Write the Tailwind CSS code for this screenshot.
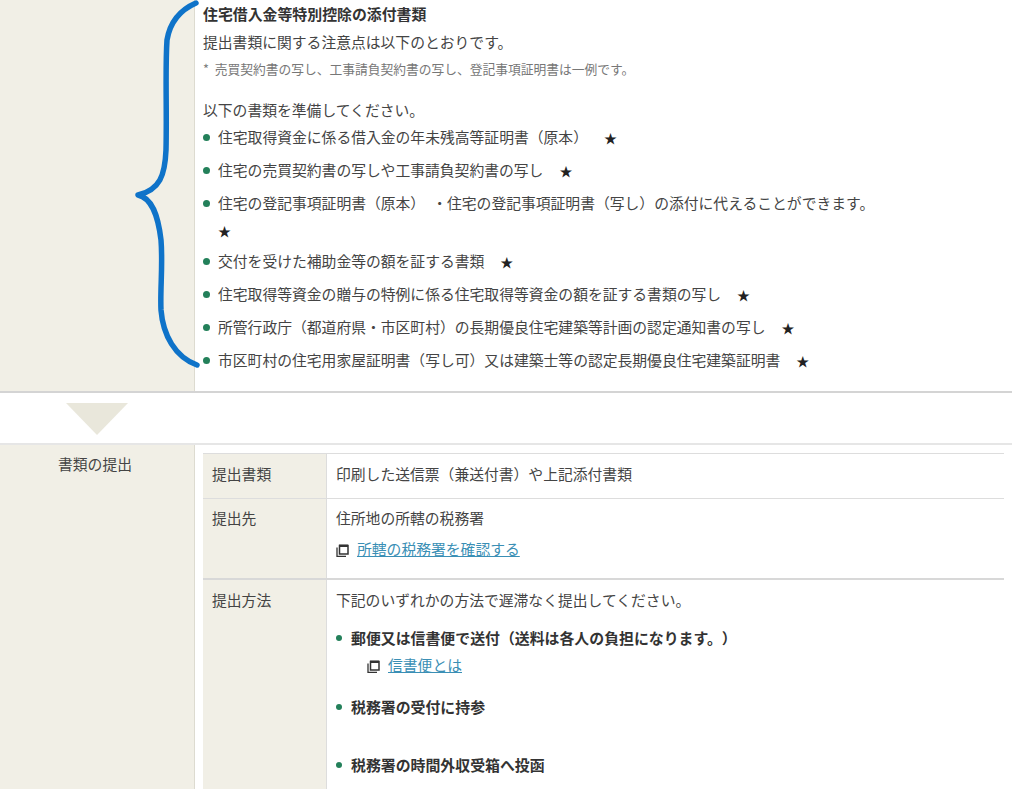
<!DOCTYPE html>
<html lang="ja">
<head>
  <meta charset="UTF-8" />
  <title>住宅借入金等特別控除の添付書類</title>
  <script src="https://cdn.jsdelivr.net/npm/@tailwindcss/browser@4"></script>
</head>
<body class="relative h-[789px] w-[1024px] overflow-hidden bg-white font-['Noto_Sans_CJK_JP','Noto_Sans',sans-serif] text-[14.8px] text-[#444] [text-spacing-trim:space-all]">
  <div class="w-[1012px]">

    <section class="flex h-[393px] border-b-2 border-[#d4d4d4]">
      <div class="w-[195px] shrink-0 border-r border-[#dddbd0] bg-[#f1efe6]"></div>
      <div class="flex-1 pl-[8px] pt-[2px]">
        <h3 class="text-[14.9px] font-bold leading-[24px] text-[#333]">住宅借入金等特別控除の添付書類</h3>
        <p class="mt-[4px] leading-[24px]">提出書類に関する注意点は以下のとおりです。</p>
        <p class="mt-[4px] text-[12.75px] leading-[22px] text-[#777]"><span class="mr-[3px]">*</span> 売買契約書の写し、工事請負契約書の写し、登記事項証明書は一例です。</p>
        <p class="mt-[18px] leading-[24px]">以下の書類を準備してください。</p>
        <ul class="mt-[1px] flex flex-col gap-[6px] leading-[27px]">
          <li class="flex"><span class="mr-[8px] mt-[11px] size-[7px] shrink-0 rounded-full bg-[#23805a]"></span><span>住宅取得資金に係る借入金の年未残高等証明書（原本）<span class="ml-[16px] text-[13px] leading-none text-[#222]">★</span></span></li>
          <li class="flex"><span class="mr-[8px] mt-[11px] size-[7px] shrink-0 rounded-full bg-[#23805a]"></span><span>住宅の売買契約書の写しや工事請負契約書の写し<span class="ml-[16px] text-[13px] leading-none text-[#222]">★</span></span></li>
          <li class="-mb-[2px] flex"><span class="mr-[8px] mt-[11px] size-[7px] shrink-0 rounded-full bg-[#23805a]"></span><span class="w-[680px]">住宅の登記事項証明書（原本）<span class="ml-[7px]">・</span>住宅の登記事項証明書（写し）の添付に代えることができます。<br /><span class="text-[13px] leading-none text-[#222]">★</span></span></li>
          <li class="flex"><span class="mr-[8px] mt-[11px] size-[7px] shrink-0 rounded-full bg-[#23805a]"></span><span>交付を受けた補助金等の額を証する書類<span class="ml-[16px] text-[13px] leading-none text-[#222]">★</span></span></li>
          <li class="flex"><span class="mr-[8px] mt-[11px] size-[7px] shrink-0 rounded-full bg-[#23805a]"></span><span>住宅取得等資金の贈与の特例に係る住宅取得等資金の額を証する書類の写し<span class="ml-[16px] text-[13px] leading-none text-[#222]">★</span></span></li>
          <li class="flex"><span class="mr-[8px] mt-[11px] size-[7px] shrink-0 rounded-full bg-[#23805a]"></span><span>所管行政庁（都道府県・市区町村）の長期優良住宅建築等計画の認定通知書の写し<span class="ml-[16px] text-[13px] leading-none text-[#222]">★</span></span></li>
          <li class="flex"><span class="mr-[8px] mt-[11px] size-[7px] shrink-0 rounded-full bg-[#23805a]"></span><span>市区町村の住宅用家屋証明書（写し可）又は建築士等の認定長期優良住宅建築証明書<span class="ml-[16px] text-[13px] leading-none text-[#222]">★</span></span></li>
        </ul>
      </div>
    </section>

    <div class="h-[50px] pl-[66px] pt-[10px]">
      <div class="h-0 w-0 border-x-[31px] border-t-[32px] border-x-transparent border-t-[#e9e7db]"></div>
    </div>

    <section class="flex border-t-2 border-[#e6e6e6]">
      <div class="w-[195px] shrink-0 border-r border-[#dddbd0] bg-[#f1efe6] pt-[7px] pr-[4px] text-center leading-[24px]">書類の提出</div>
      <div class="flex-1 pl-[8px] pr-[8px] pt-[8px]">
        <div class="border-t border-[#ddd]">

          <div class="flex h-[45px] border-b border-[#ddd]">
            <div class="w-[124px] shrink-0 border-r border-[#ddd] bg-[#f1efe6] pl-[9px] pt-[8px] leading-[24px]">提出書類</div>
            <div class="pl-[9px] pt-[8px] leading-[24px]">印刷した送信票（兼送付書）や上記添付書類</div>
          </div>

          <div class="flex h-[81px] border-b-2 border-[#d8d8d8]">
            <div class="w-[124px] shrink-0 border-r border-[#ddd] bg-[#f1efe6] pl-[9px] pt-[7px] leading-[24px]">提出先</div>
            <div class="pl-[9px] pt-[7px] leading-[24px]">
              <p>住所地の所轄の税務署</p>
              <p class="mt-[7px] flex items-center">
                <svg class="mr-[8px] mt-[2px]" width="13" height="13" viewBox="0 0 13 13" fill="none" stroke="#333"><path d="M3.5 1.5h8.5v8.5h-8.5z" stroke-width="1.5" /><path d="M3 1.8h9" stroke-width="2.4" /><path d="M1 3.5v9h9" stroke-width="1.3" /></svg>
                <a href="#" class="text-[#3a8fb5] underline">所轄の税務署を確認する</a>
              </p>
            </div>
          </div>

          <div class="flex h-[209px]">
            <div class="w-[124px] shrink-0 border-r border-[#ddd] bg-[#f1efe6] pl-[9px] pt-[8px] leading-[24px]">提出方法</div>
            <div class="pl-[9px] pt-[8px] leading-[24px]">
              <p>下記のいずれかの方法で遅滞なく提出してください。</p>
              <ul class="mt-[14px] text-[14.9px] font-bold text-[#333]">
                <li class="flex"><span class="mr-[9px] mt-[9px] size-[6px] shrink-0 rounded-full bg-[#23805a]"></span>郵便又は信書便で送付（送料は各人の負担になります。）</li>
                <li class="mt-[3px] flex items-center pl-[31px] text-[14.8px] font-normal">
                  <svg class="mr-[8px] mt-[2px]" width="13" height="13" viewBox="0 0 13 13" fill="none" stroke="#333"><path d="M3.5 1.5h8.5v8.5h-8.5z" stroke-width="1.5" /><path d="M3 1.8h9" stroke-width="2.4" /><path d="M1 3.5v9h9" stroke-width="1.3" /></svg>
                  <a href="#" class="text-[#3a8fb5] underline">信書便とは</a>
                </li>
                <li class="mt-[18px] flex"><span class="mr-[9px] mt-[9px] size-[6px] shrink-0 rounded-full bg-[#23805a]"></span>税務署の受付に持参</li>
                <li class="mt-[34px] flex"><span class="mr-[9px] mt-[9px] size-[6px] shrink-0 rounded-full bg-[#23805a]"></span>税務署の時間外収受箱へ投函</li>
              </ul>
            </div>
          </div>

        </div>
      </div>
    </section>
  </div>

  <!-- hand drawn brace over the page -->
  <svg class="absolute left-0 top-0" width="220" height="380" viewBox="0 0 220 380" fill="none">
    <path d="M196 3C180 10 170 22 167 40C165 70 167 110 166 150C165 175 160 190 138 195C152 198 158 215 161 240C163 265 160 290 161 310C163 335 175 357 197 365" stroke="#0f73c9" stroke-width="5.5" stroke-linecap="round" stroke-linejoin="round" />
  </svg>
</body>
</html>
